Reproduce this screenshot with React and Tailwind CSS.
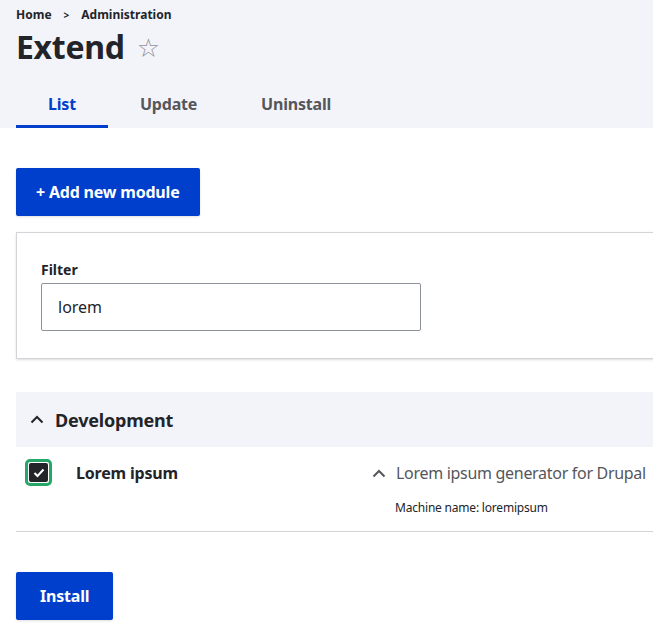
import React, { useState } from 'react'

const font = { fontFamily: '"Noto Sans", "DejaVu Sans", sans-serif' }

const Chevron = ({ className = '' }) => (
  <svg className={className} width="14" height="9" viewBox="0 0 14 9" fill="none">
    <path d="M1.5 7.5L7 2l5.5 5.5" stroke="currentColor" strokeWidth="2" />
  </svg>
)

const Tab = ({ label, active }) => (
  <div className={`px-8 pb-[9px] text-base font-bold leading-6 tracking-[-0.2px] ${active ? 'text-[#003ecc] border-b-[3px] border-[#003ecc]' : 'text-[#55565b] border-b-[3px] border-transparent'}`}>
    {label}
  </div>
)

export default function App() {
  const [filter, setFilter] = useState('lorem')
  const [checked, setChecked] = useState(true)

  return (
    <div className="min-h-[630px] w-[653px] overflow-hidden bg-white text-[#232429]" style={font}>
      {/* Header */}
      <div className="bg-[#f3f4f9] px-4 pt-[7px]">
        <div className="flex items-center gap-3 text-xs font-bold leading-4">
          <span>Home</span>
          <span className="text-[10px]">&gt;</span>
          <span>Administration</span>
        </div>
        <div className="mt-1 flex items-center gap-3">
          <h1 className="text-[32px] font-bold leading-10 tracking-[-0.3px]">Extend</h1>
          <span className="text-[26px] leading-none text-[#919297]">☆</span>
        </div>
        <div className="mt-[25px] flex">
          <Tab label="List" active />
          <Tab label="Update" />
          <Tab label="Uninstall" />
        </div>
      </div>

      <div className="px-4 pt-10">
        <button className="h-12 rounded-[2px] bg-[#003ecc] px-5 text-base font-bold tracking-[-0.2px] text-white shadow-sm">
          + Add new module
        </button>

        {/* Filter card */}
        <div className="mt-4 -mr-10 border border-[#d4d4d8] bg-white px-6 pt-[27px] pb-[27px] shadow-sm">
          <label className="block text-sm font-bold leading-5">Filter</label>
          <input
            value={filter}
            onChange={(e) => setFilter(e.target.value)}
            className="mt-[3px] h-12 w-[380px] rounded-[2px] border border-[#8e929c] px-4 text-base text-[#232429] outline-none"
          />
        </div>

        {/* Development */}
        <div className="mt-[33px] -mr-10">
          <div className="flex h-[55px] items-center gap-[11px] bg-[#f3f4f9] px-[14px]">
            <Chevron className="text-[#232429]" />
            <span className="text-lg font-bold tracking-[-0.2px]">Development</span>
          </div>
          <div className="flex border-b border-[#d4d4d8] pt-3 pb-[15px]">
            <div className="flex w-[356px] items-start">
              <button
                onClick={() => setChecked(!checked)}
                className="ml-[9px] box-border flex h-[27px] w-[27px] shrink-0 items-center justify-center rounded-[5px] border-[3px] border-[#26a769] p-[1px]"
              >
                <span className="flex h-full w-full items-center justify-center rounded-[2px] bg-[#232429]">
                  {checked && (
                    <svg width="12" height="10" viewBox="0 0 12 10" fill="none">
                      <path d="M1.5 5l3 3L10.5 1.5" stroke="white" strokeWidth="2" />
                    </svg>
                  )}
                </span>
              </button>
              <span className="ml-6 pt-[2px] text-base font-bold leading-6 tracking-[-0.2px]">Lorem ipsum</span>
            </div>
            <div className="flex flex-col">
              <div className="flex items-center gap-[10px] pt-[2px] text-base leading-6 text-[#55565b]">
                <Chevron className="text-[#55565b]" />
                <span className="whitespace-nowrap tracking-[-0.3px]">Lorem ipsum generator for Drupal</span>
              </div>
              <div className="mt-[15px] ml-[23px] text-xs leading-4 tracking-[-0.2px] text-[#232429]">Machine name: loremipsum</div>
            </div>
          </div>
        </div>

        <button className="mt-10 h-12 rounded-[2px] bg-[#003ecc] px-6 text-base font-bold tracking-[-0.2px] text-white shadow-sm">
          Install
        </button>
      </div>
    </div>
  )
}
